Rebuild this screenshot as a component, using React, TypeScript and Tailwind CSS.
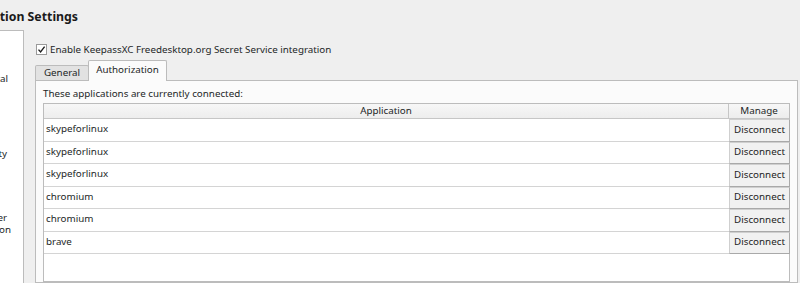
import React from "react";

const apps = ["skypeforlinux", "skypeforlinux", "skypeforlinux", "chromium", "chromium", "brave"];

export default function App() {
  return (
    <div className="w-[800px] h-[283px] bg-[#efefef] overflow-hidden flex flex-col text-[9.8px] text-[#232627] font-['Noto_Sans',sans-serif]">
      <div className="h-[30px] pt-[9px]">
        <div className="w-[78px] flex justify-end overflow-hidden whitespace-nowrap font-bold text-[12.3px] leading-[16px] text-[#1a1a1a]">
          <span>Secret Service Integration Settings</span>
        </div>
      </div>

      <div className="flex flex-1 min-h-0">
        {/* category list, cut off on the left */}
        <div className="w-[24px] bg-white border-t border-r border-[#bcbcbc] overflow-hidden">
          <div className="flex flex-col whitespace-nowrap leading-[12px]">
            <div className="flex justify-end pr-[15px] pt-[42px]">General</div>
            <div className="flex justify-end pr-[16px] pt-[63px]">Security</div>
            <div className="flex justify-end pr-[16px] pt-[52px]">Browser</div>
            <div className="flex justify-end pr-[12px]">Integration</div>
          </div>
        </div>

        <div className="flex-1 flex flex-col ml-[11px] mr-[2px] min-w-0">
          <label className="flex items-center gap-[3px] mt-[14px] h-[11px] ml-[1px]">
            <span className="w-[11px] h-[11px] bg-white border border-[#9a9a9a] flex items-center justify-center">
              <svg width="9" height="9" viewBox="0 0 9 9">
                <path d="M1.5 4.6 L3.6 7 L7.6 1.6" fill="none" stroke="#1e1e1e" strokeWidth="1.4" />
              </svg>
            </span>
            <span className="leading-[12px]">Enable KeepassXC Freedesktop.org Secret Service integration</span>
          </label>

          <div className="flex items-end h-[20px] mt-[5px]">
            <div className="w-[54px] h-[15px] bg-[#e2e2e2] border border-b-0 border-[#bcbcbc] rounded-t-[2px] flex items-center justify-center">
              General
            </div>
            <div className="relative z-10 w-[79px] h-[21px] -ml-px -mb-px bg-[#fbfbfb] border border-b-0 border-[#bcbcbc] rounded-t-[2px] flex items-center justify-center pb-[1px]">
              Authorization
            </div>
          </div>

          <div className="flex-1 flex flex-col bg-[#fbfbfb] border border-[#bcbcbc] pl-[7px] pr-[7px] pt-[7px]">
            <div className="leading-[12px]">These applications are currently connected:</div>
            <div className="flex-1 flex flex-col mt-[3px] bg-white border border-[#bcbcbc]">
              <div className="flex h-[15px] border-b border-[#c6c6c6] bg-gradient-to-b from-[#f7f7f7] to-[#ededed] leading-[14px]">
                <div className="flex-1 text-center border-r border-[#c6c6c6]">Application</div>
                <div className="w-[60px] text-center">Manage</div>
              </div>
              {apps.map((name, i) => (
                <div key={i} className="flex h-[22.5px]">
                  <div className="flex-1 flex items-center pl-[2px] border-b border-[#d4d4d4]">{name}</div>
                  <button className="w-[61px] -mr-px h-full bg-[#f1f1f1] border border-[#cfcfcf] border-r-[#a9a9a9] border-b-[#a9a9a9] flex items-center justify-center text-[#1e1e1e]">
                    Disconnect
                  </button>
                </div>
              ))}
            </div>
          </div>
        </div>
      </div>
    </div>
  );
}
